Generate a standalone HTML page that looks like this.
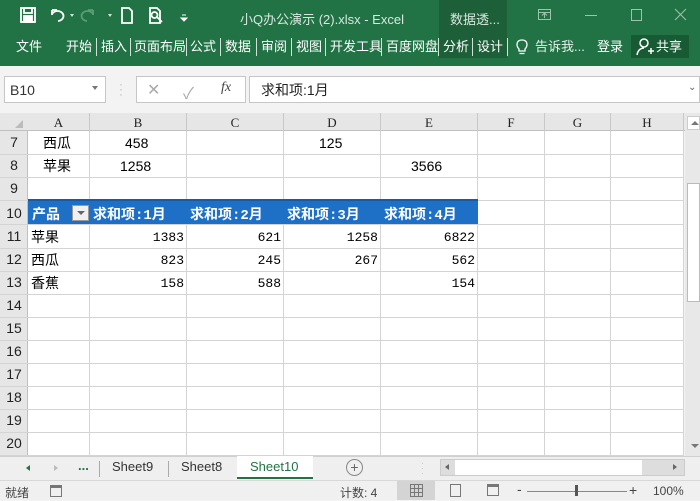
<!DOCTYPE html>
<html><head><meta charset="utf-8"><style>
*{margin:0;padding:0;box-sizing:border-box}
body{width:700px;height:500px;overflow:hidden;background:#f3f3f3;font-family:"Liberation Sans","Noto Sans CJK SC",sans-serif;position:relative}
.a{position:absolute}
.g{background:#217346}
.t{color:#fff;font-size:13px;top:38px;line-height:17px}
.sep{position:absolute;top:38px;width:1px;height:18px;background:#cfe3d6}
.cell{position:absolute;font-size:14px;line-height:22px}
.hl{position:absolute;left:0;width:683px;height:1px;background:#d4d4d4}
.vl{position:absolute;top:131px;width:1px;height:325px;background:#d4d4d4}
.rh{position:absolute;left:0;width:28px;font-size:14px;text-align:center;color:#222;font-family:"Liberation Sans",sans-serif}
.ch{position:absolute;top:113px;height:18px;font-family:"Liberation Serif",serif;font-size:13px;text-align:center;line-height:20px;color:#222;border-right:1px solid #c8c8c8}
.num{font-family:"Liberation Mono",monospace;font-size:13px;text-align:right}
.ph{font-family:"Liberation Mono","Noto Sans CJK SC",monospace;font-weight:bold;color:#fff;font-size:14px}
</style></head><body>
<div class="a g" style="left:0;top:0;width:700px;height:66px"></div>
<div class="a" style="left:439px;top:0;width:68px;height:58px;background:#1d5f39"></div>
<div class="a" style="left:631px;top:35px;width:58px;height:23px;background:#185a34"></div>
<!-- quick access -->
<svg class="a" style="left:0;top:0" width="200" height="33">
<g fill="none" stroke="#fff" stroke-width="1.8">
<rect x="21" y="8" width="14" height="14"/><rect x="24" y="8" width="8" height="5"/><rect x="24" y="16" width="8" height="6" fill="#fff"/>
<path d="M52 10 L52 15 M52 10 L57 10 M52 14 A6 5 0 1 1 58 21"/>
<path d="M93 10 L93 15 M93 10 L88 10 M93 14 A6 5 0 1 0 87 21" stroke="#5c9c75"/>
<path d="M122 8 L129 8 L132 11 L132 23 L122 23 Z"/>
<path d="M150 8 L157 8 L160 11 L160 23 L150 23 Z"/><circle cx="154.5" cy="15" r="3"/><path d="M157 17 L162 22"/>
</g>
<path d="M70 14 L74 14 L72 17Z M108 14 L112 14 L110 17Z" fill="#fff" opacity=".8"/>
<path d="M182 15 L186 15 M181 18 L187 18 L184 21Z" stroke="#fff" fill="#fff" stroke-width="1"/>
</svg>
<div class="a" style="left:240px;top:9px;color:#d8e8de;font-size:13px">小Q办公演示 (2).xlsx - Excel</div>
<div class="a" style="left:450px;top:9px;color:#d8e8de;font-size:13px">数据透...</div>
<svg class="a" style="left:530px;top:0" width="170" height="33"><g stroke="#9cc4ab" fill="none" stroke-width="1"><rect x="8.5" y="9.5" width="12" height="10"/><path d="M8 12.5H21 M14.5 13v5 M12 15.5l2.5-2.5 2.5 2.5"/><path d="M55 15.5H67"/><rect x="101.5" y="9.5" width="10" height="11"/><path d="M145 9 L156 20 M156 9 L145 20"/></g></svg>
<div class="a t" style="left:16px">文件</div>
<div class="a t" style="left:66px">开始</div><div class="sep" style="left:96px"></div>
<div class="a t" style="left:101px">插入</div><div class="sep" style="left:130px"></div>
<div class="a t" style="left:134px">页面布局</div><div class="sep" style="left:186px"></div>
<div class="a t" style="left:190px">公式</div><div class="sep" style="left:220px"></div>
<div class="a t" style="left:225px">数据</div><div class="sep" style="left:256px"></div>
<div class="a t" style="left:261px">审阅</div><div class="sep" style="left:291px"></div>
<div class="a t" style="left:296px">视图</div><div class="sep" style="left:325px"></div>
<div class="a t" style="left:330px">开发工具</div><div class="sep" style="left:381px"></div>
<div class="a t" style="left:386px">百度网盘</div><div class="sep" style="left:438px"></div>
<div class="a t" style="left:443px">分析</div><div class="sep" style="left:472px"></div>
<div class="a t" style="left:477px">设计</div><div class="sep" style="left:507px"></div>
<svg class="a" style="left:515px;top:37px" width="14" height="20"><g fill="none" stroke="#fff" stroke-width="1.3"><path d="M4 12 C1 9 1 3 7 3 C13 3 13 9 10 12 L10 14 L4 14 Z M4.5 16.5H9.5"/></g></svg>
<div class="a t" style="left:535px;color:#e4efe8">告诉我...</div>
<div class="a t" style="left:597px">登录</div>
<svg class="a" style="left:636px;top:37px" width="20" height="20"><g fill="none" stroke="#fff" stroke-width="1.5"><circle cx="8" cy="6" r="4"/><path d="M1 18 C2 12 6 11 8 11 M12 14h6 M15 11v6"/></g></svg>
<div class="a t" style="left:656px">共享</div>
<!-- formula bar -->
<div class="a" style="left:4px;top:76px;width:102px;height:27px;background:#fff;border:1px solid #c6c6c6"></div>
<div class="a" style="left:10px;top:82px;font-size:14px;color:#333">B10</div>
<div class="a" style="left:92px;top:86px;width:0;height:0;border-left:3px solid transparent;border-right:3px solid transparent;border-top:4px solid #777"></div>
<div class="a" style="left:119px;top:82px;color:#bbb;font-size:12px;line-height:5px">·<br>·<br>·</div>
<div class="a" style="left:136px;top:76px;width:110px;height:27px;background:#fff;border:1px solid #c6c6c6"></div>
<div class="a" style="left:147px;top:80px;color:#aaa;font-size:16px">✕</div>
<div class="a" style="left:183px;top:80px;color:#aaa;font-size:16px">✓</div>
<div class="a" style="left:221px;top:80px;color:#444;font-size:14px;font-style:italic;font-family:'Liberation Serif',serif">fx</div>
<div class="a" style="left:249px;top:76px;width:451px;height:27px;background:#fff;border:1px solid #c6c6c6"></div>
<div class="a" style="left:261px;top:80px;font-size:14px;color:#222">求和项:1月</div>
<div class="a" style="left:688px;top:82px;color:#666;font-size:10px">⌄</div>
<!-- grid -->
<div class="a" style="left:0;top:113px;width:687px;height:18px;background:#e6e6e6;border-bottom:1px solid #c0c0c0"></div>
<div class="a" style="left:0;top:131px;width:28px;height:325px;background:#e6e6e6;border-right:1px solid #c0c0c0"></div>
<div class="a" style="left:28px;top:131px;width:655px;height:325px;background:#fff"></div>
<div class="a" style="left:15px;top:120px;width:0;height:0;border-left:8px solid transparent;border-bottom:8px solid #bbb"></div>
<div class="ch" style="left:28px;width:62px">A</div>
<div class="ch" style="left:90px;width:97px">B</div>
<div class="ch" style="left:187px;width:97px">C</div>
<div class="ch" style="left:284px;width:97px">D</div>
<div class="ch" style="left:381px;width:97px">E</div>
<div class="ch" style="left:478px;width:67px">F</div>
<div class="ch" style="left:545px;width:66px">G</div>
<div class="ch" style="left:611px;width:73px">H</div>
<div class="vl" style="left:89px"></div><div class="vl" style="left:186px"></div><div class="vl" style="left:283px"></div><div class="vl" style="left:380px"></div><div class="vl" style="left:477px"></div><div class="vl" style="left:544px"></div><div class="vl" style="left:610px"></div><div class="vl" style="left:683px"></div>
<div class="hl" style="top:154px"></div><div class="hl" style="top:177px"></div><div class="hl" style="top:200px"></div><div class="hl" style="top:224px"></div><div class="hl" style="top:248px"></div><div class="hl" style="top:271px"></div><div class="hl" style="top:294px"></div><div class="hl" style="top:317px"></div><div class="hl" style="top:340px"></div><div class="hl" style="top:363px"></div><div class="hl" style="top:386px"></div><div class="hl" style="top:409px"></div><div class="hl" style="top:432px"></div><div class="hl" style="top:455px"></div>
<div class="rh" style="top:134px">7</div><div class="rh" style="top:157px">8</div><div class="rh" style="top:180px">9</div><div class="rh" style="top:205px">10</div><div class="rh" style="top:228px">11</div><div class="rh" style="top:251px">12</div><div class="rh" style="top:274px">13</div><div class="rh" style="top:297px">14</div><div class="rh" style="top:320px">15</div><div class="rh" style="top:343px">16</div><div class="rh" style="top:366px">17</div><div class="rh" style="top:389px">18</div><div class="rh" style="top:412px">19</div><div class="rh" style="top:435px">20</div>
<div class="cell" style="left:43px;top:132px">西瓜</div><div class="cell" style="left:125px;top:132px">458</div><div class="cell" style="left:319px;top:132px">125</div>
<div class="cell" style="left:43px;top:155px">苹果</div><div class="cell" style="left:120px;top:155px">1258</div><div class="cell" style="left:411px;top:155px">3566</div>
<div class="a" style="left:28px;top:199px;width:450px;height:25px;background:#1e6fc6;border-top:2px solid #185ba3"></div>
<div class="a ph" style="left:32px;top:204px">产品</div>
<div class="a" style="left:72px;top:205px;width:17px;height:16px;background:#f0f0f0;border:1px solid #999"></div>
<div class="a" style="left:77px;top:211px;width:0;height:0;border-left:4px solid transparent;border-right:4px solid transparent;border-top:4px solid #666"></div>
<div class="a ph" style="left:93px;top:204px">求和项:1月</div>
<div class="a ph" style="left:190px;top:204px">求和项:2月</div>
<div class="a ph" style="left:287px;top:204px">求和项:3月</div>
<div class="a ph" style="left:384px;top:204px">求和项:4月</div>
<div class="cell" style="left:31px;top:226px">苹果</div><div class="cell" style="left:31px;top:249px">西瓜</div><div class="cell" style="left:31px;top:272px">香蕉</div>
<div class="cell num" style="left:90px;width:94px;top:227px">1383</div><div class="cell num" style="left:187px;width:94px;top:227px">621</div><div class="cell num" style="left:284px;width:94px;top:227px">1258</div><div class="cell num" style="left:381px;width:94px;top:227px">6822</div>
<div class="cell num" style="left:90px;width:94px;top:250px">823</div><div class="cell num" style="left:187px;width:94px;top:250px">245</div><div class="cell num" style="left:284px;width:94px;top:250px">267</div><div class="cell num" style="left:381px;width:94px;top:250px">562</div>
<div class="cell num" style="left:90px;width:94px;top:273px">158</div><div class="cell num" style="left:187px;width:94px;top:273px">588</div><div class="cell num" style="left:381px;width:94px;top:273px">154</div>
<!-- vscroll -->
<div class="a" style="left:685px;top:113px;width:15px;height:343px;background:#e8e8e8"></div>
<div class="a" style="left:687px;top:116px;width:13px;height:14px;background:#fff;border:1px solid #ccc"></div>
<div class="a" style="left:691px;top:121px;border-left:4px solid transparent;border-right:4px solid transparent;border-bottom:4px solid #777"></div>
<div class="a" style="left:687px;top:183px;width:13px;height:119px;background:#fff;border:1px solid #bbb"></div>
<div class="a" style="left:691px;top:444px;border-left:4px solid transparent;border-right:4px solid transparent;border-top:4px solid #777"></div>
<!-- tabs -->
<div class="a" style="left:0;top:456px;width:700px;height:24px;background:#efefef;border-top:1px solid #d0d0d0"></div>
<div class="a" style="left:26px;top:465px;border-top:3px solid transparent;border-bottom:3px solid transparent;border-right:4px solid #217346"></div>
<div class="a" style="left:54px;top:465px;border-top:3px solid transparent;border-bottom:3px solid transparent;border-left:4px solid #bbb"></div>
<div class="a" style="left:78px;top:458px;font-size:13px;font-weight:bold;color:#217346">...</div>
<div class="a" style="left:99px;top:461px;width:1px;height:16px;background:#aaa"></div>
<div class="a" style="left:112px;top:459px;font-size:13px;color:#333">Sheet9</div>
<div class="a" style="left:168px;top:461px;width:1px;height:16px;background:#aaa"></div>
<div class="a" style="left:181px;top:459px;font-size:13px;color:#333">Sheet8</div>
<div class="a" style="left:237px;top:456px;width:76px;height:23px;background:#fff;border-bottom:2px solid #217346"></div>
<div class="a" style="left:250px;top:459px;font-size:13px;color:#217346">Sheet10</div>
<div class="a" style="left:346px;top:459px;width:17px;height:17px;border:1px solid #888;border-radius:50%;text-align:center;font-size:14px;line-height:14px;color:#666">+</div>
<div class="a" style="left:421px;top:461px;color:#bbb;font-size:8px;line-height:5px">·<br>·<br>·</div>
<div class="a" style="left:440px;top:459px;width:245px;height:17px;background:#ddd;border:1px solid #ccc"></div>
<div class="a" style="left:455px;top:460px;width:187px;height:15px;background:#fff"></div>
<div class="a" style="left:445px;top:464px;border-top:3px solid transparent;border-bottom:3px solid transparent;border-right:4px solid #666"></div>
<div class="a" style="left:673px;top:464px;border-top:3px solid transparent;border-bottom:3px solid transparent;border-left:4px solid #666"></div>
<!-- status -->
<div class="a" style="left:0;top:480px;width:700px;height:20px;background:#f0f0f0;border-top:1px solid #d8d8d8"></div>
<div class="a" style="left:5px;top:484px;font-size:12px;color:#444">就绪</div>
<div class="a" style="left:50px;top:485px;width:12px;height:12px;border:1px solid #777;border-top:3px solid #777"></div>
<div class="a" style="left:340px;top:484px;font-size:12px;color:#444">计数: 4</div>
<div class="a" style="left:397px;top:481px;width:38px;height:19px;background:#d4d4d4"></div>
<div class="a" style="left:410px;top:484px;width:13px;height:13px;border:1px solid #777;background:repeating-linear-gradient(90deg,transparent 0 3px,#777 3px 4px),repeating-linear-gradient(0deg,transparent 0 3px,#777 3px 4px)"></div>
<div class="a" style="left:450px;top:484px;width:11px;height:13px;border:1px solid #777"></div>
<div class="a" style="left:487px;top:484px;width:12px;height:12px;border:1px solid #777;border-top:3px solid #777"></div>
<div class="a" style="left:517px;top:481px;font-size:14px;color:#444">-</div>
<div class="a" style="left:527px;top:491px;width:100px;height:1px;background:#888"></div>
<div class="a" style="left:575px;top:485px;width:3px;height:11px;background:#555"></div>
<div class="a" style="left:629px;top:482px;font-size:14px;color:#444">+</div>
<div class="a" style="left:653px;top:484px;font-size:12px;color:#444">100%</div>
</body></html>
